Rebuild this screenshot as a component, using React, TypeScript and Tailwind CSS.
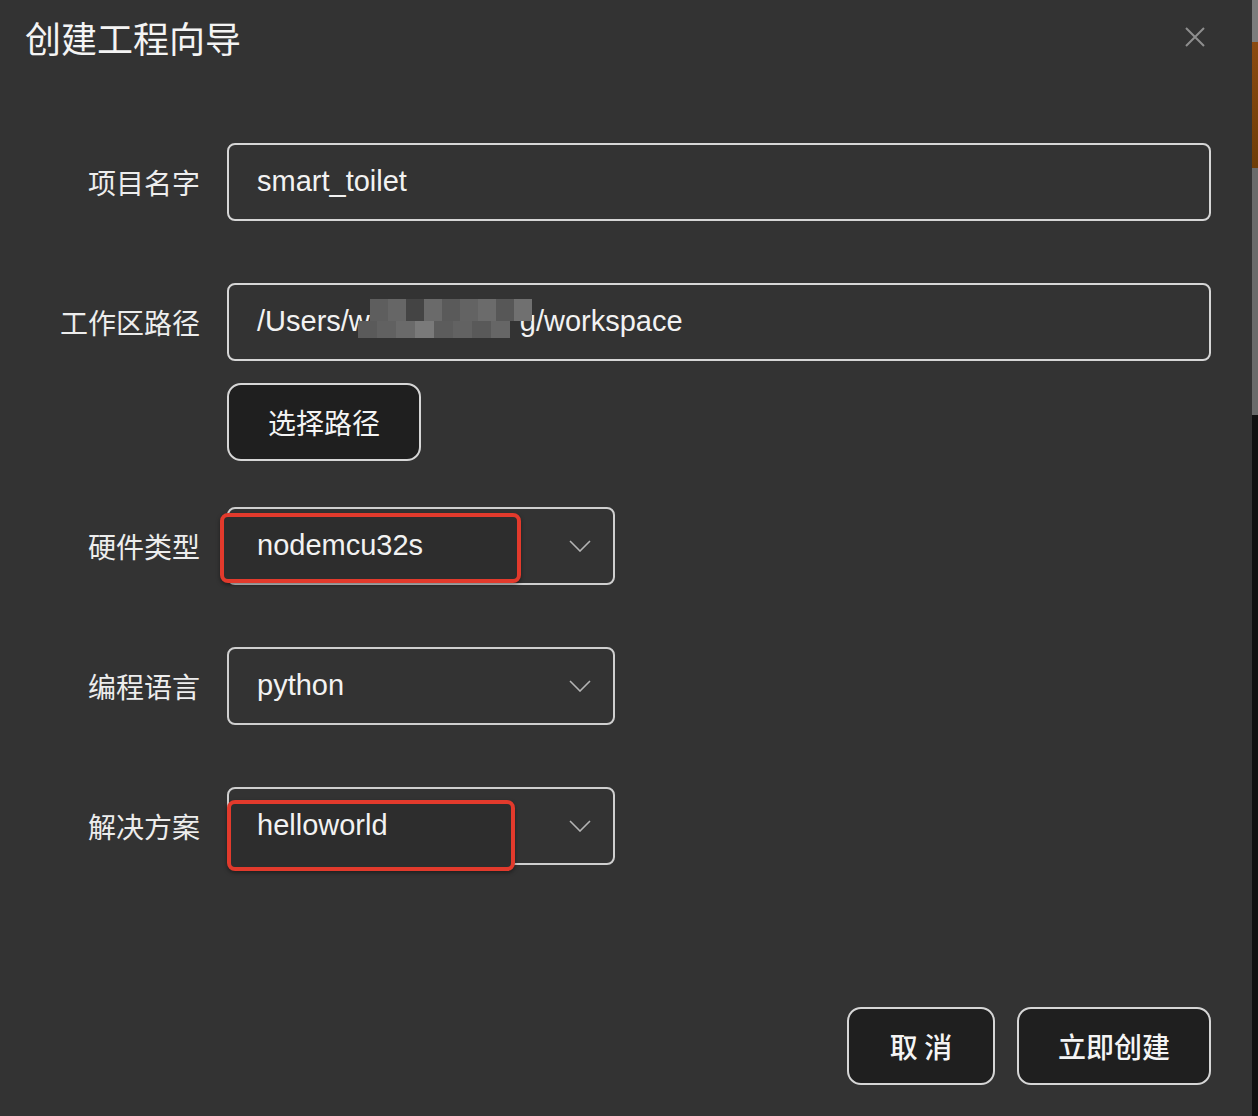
import React from "react";

const cjk = { fontFamily: '"Noto Sans CJK SC", "Noto Sans", sans-serif' };
const latin = { fontFamily: '"Liberation Sans", "Noto Sans CJK SC", sans-serif' };

const Chevron = () => (
  <svg width="22" height="12" viewBox="0 0 22 12" fill="none">
    <path d="M1 1 L11 11 L21 1" stroke="#b4b4b4" strokeWidth="1.6" />
  </svg>
);

const CloseIcon = () => (
  <svg width="22" height="22" viewBox="0 0 22 22" fill="none">
    <path d="M2 2 L20 20 M20 2 L2 20" stroke="#8e8e8e" strokeWidth="2" />
  </svg>
);

// pixelated block that hides part of the path
const mosaicTop = ["#5e5e5e", "#666666", "#444444", "#6a6a6a", "#5a5a5a", "#636363", "#6b6b6b", "#575757", "#707070"];
const mosaicBottom = ["#5a5a5a", "#616161", "#6a6a6a", "#7a7a7a", "#5c5c5c", "#626262", "#595959", "#666666"];

const Mosaic = () => (
  <span className="relative inline-block w-[150px] h-[30px] align-middle">
    <span className="absolute left-0 top-[-8px] flex">
      {mosaicTop.map((c, i) => (
        <span key={i} className="block w-[18px] h-[22px]" style={{ backgroundColor: c }} />
      ))}
    </span>
    <span className="absolute left-[-12px] top-[14px] flex">
      {mosaicBottom.map((c, i) => (
        <span key={i} className="block w-[19px] h-[17px]" style={{ backgroundColor: c }} />
      ))}
    </span>
  </span>
);

const Label = ({ children }: { children: React.ReactNode }) => (
  <div className="w-[200px] shrink-0 text-right text-[28px] text-[#ededed]" style={cjk}>
    {children}
  </div>
);

const Select = ({ value, mark }: { value: string; mark?: "a" | "b" }) => (
  <div className="relative w-[388px] h-[78px] rounded-[8px] border-2 border-[#cfcfcf] flex items-center justify-between pl-[28px] pr-[22px]">
    {mark === "a" && (
      <div className="absolute left-[-9px] top-[4px] w-[301px] h-[70px] rounded-[8px] border-[4px] border-[#e23a2c] bg-[#2d2d2d] shadow-[0_2px_4px_rgba(0,0,0,0.4)]" />
    )}
    {mark === "b" && (
      <div className="absolute left-[-2px] top-[11px] w-[288px] h-[71px] rounded-[8px] border-[4px] border-[#e23a2c] bg-[#2d2d2d] shadow-[0_2px_4px_rgba(0,0,0,0.4)]" />
    )}
    <span className="relative text-[29px] text-[#f2f2f2]" style={latin}>
      {value}
    </span>
    <span className="relative">
      <Chevron />
    </span>
  </div>
);

export default function App() {
  return (
    <div className="w-[1258px] h-[1116px] flex overflow-hidden">
      <div className="w-[1252px] h-full bg-[#333333] flex flex-col">
        {/* Header */}
        <div className="h-[74px] flex items-center justify-between pl-[25px] pr-[46px]">
          <h1 className="text-[36px] text-[#f4f4f4] leading-none" style={cjk}>
            创建工程向导
          </h1>
          <CloseIcon />
        </div>

        {/* Form */}
        <div className="flex flex-col pr-[41px] mt-[69px]">
          <div className="flex items-center gap-[27px]">
            <Label>项目名字</Label>
            <div className="flex-1 h-[78px] rounded-[8px] border-2 border-[#d6d6d6] flex items-center pl-[28px] text-[29px] text-[#f2f2f2]" style={latin}>
              smart_toilet
            </div>
          </div>

          <div className="flex items-center gap-[27px] mt-[62px]">
            <Label>工作区路径</Label>
            <div className="flex-1 h-[78px] rounded-[8px] border-2 border-[#d6d6d6] flex items-center pl-[28px] text-[29px] text-[#f2f2f2] whitespace-pre" style={latin}>
              /Users/w<Mosaic />g/workspace
            </div>
          </div>

          <div className="flex gap-[27px] mt-[22px]">
            <div className="w-[200px] shrink-0" />
            <button className="w-[194px] h-[78px] rounded-[14px] border-2 border-[#d6d6d6] bg-[#1f1f1f] text-[28px] text-[#f4f4f4]" style={cjk}>
              选择路径
            </button>
          </div>

          <div className="flex items-center gap-[27px] mt-[46px]">
            <Label>硬件类型</Label>
            <Select value="nodemcu32s" mark="a" />
          </div>

          <div className="flex items-center gap-[27px] mt-[62px]">
            <Label>编程语言</Label>
            <Select value="python" />
          </div>

          <div className="flex items-center gap-[27px] mt-[62px]">
            <Label>解决方案</Label>
            <Select value="helloworld" mark="b" />
          </div>
        </div>

        {/* Footer */}
        <div className="flex justify-end gap-[22px] pr-[41px] mt-[142px]">
          <button className="w-[148px] h-[78px] rounded-[14px] border-2 border-[#d6d6d6] bg-[#1f1f1f] text-[28px] font-medium text-[#f4f4f4] whitespace-pre" style={cjk}>
            取 消
          </button>
          <button className="w-[194px] h-[78px] rounded-[14px] border-2 border-[#d6d6d6] bg-[#1f1f1f] text-[28px] font-medium text-[#f4f4f4]" style={cjk}>
            立即创建
          </button>
        </div>
      </div>

      {/* Edge of the window behind */}
      <div className="w-[6px] h-full flex flex-col">
        <div className="h-[42px] bg-[#7c7c7c]" />
        <div className="h-[126px] bg-gradient-to-b from-[#8b4a10] to-[#6e3c08]" />
        <div className="h-[247px] bg-[#6a6a6a]" />
        <div className="flex-1 bg-[#111111]" />
      </div>
    </div>
  );
}
